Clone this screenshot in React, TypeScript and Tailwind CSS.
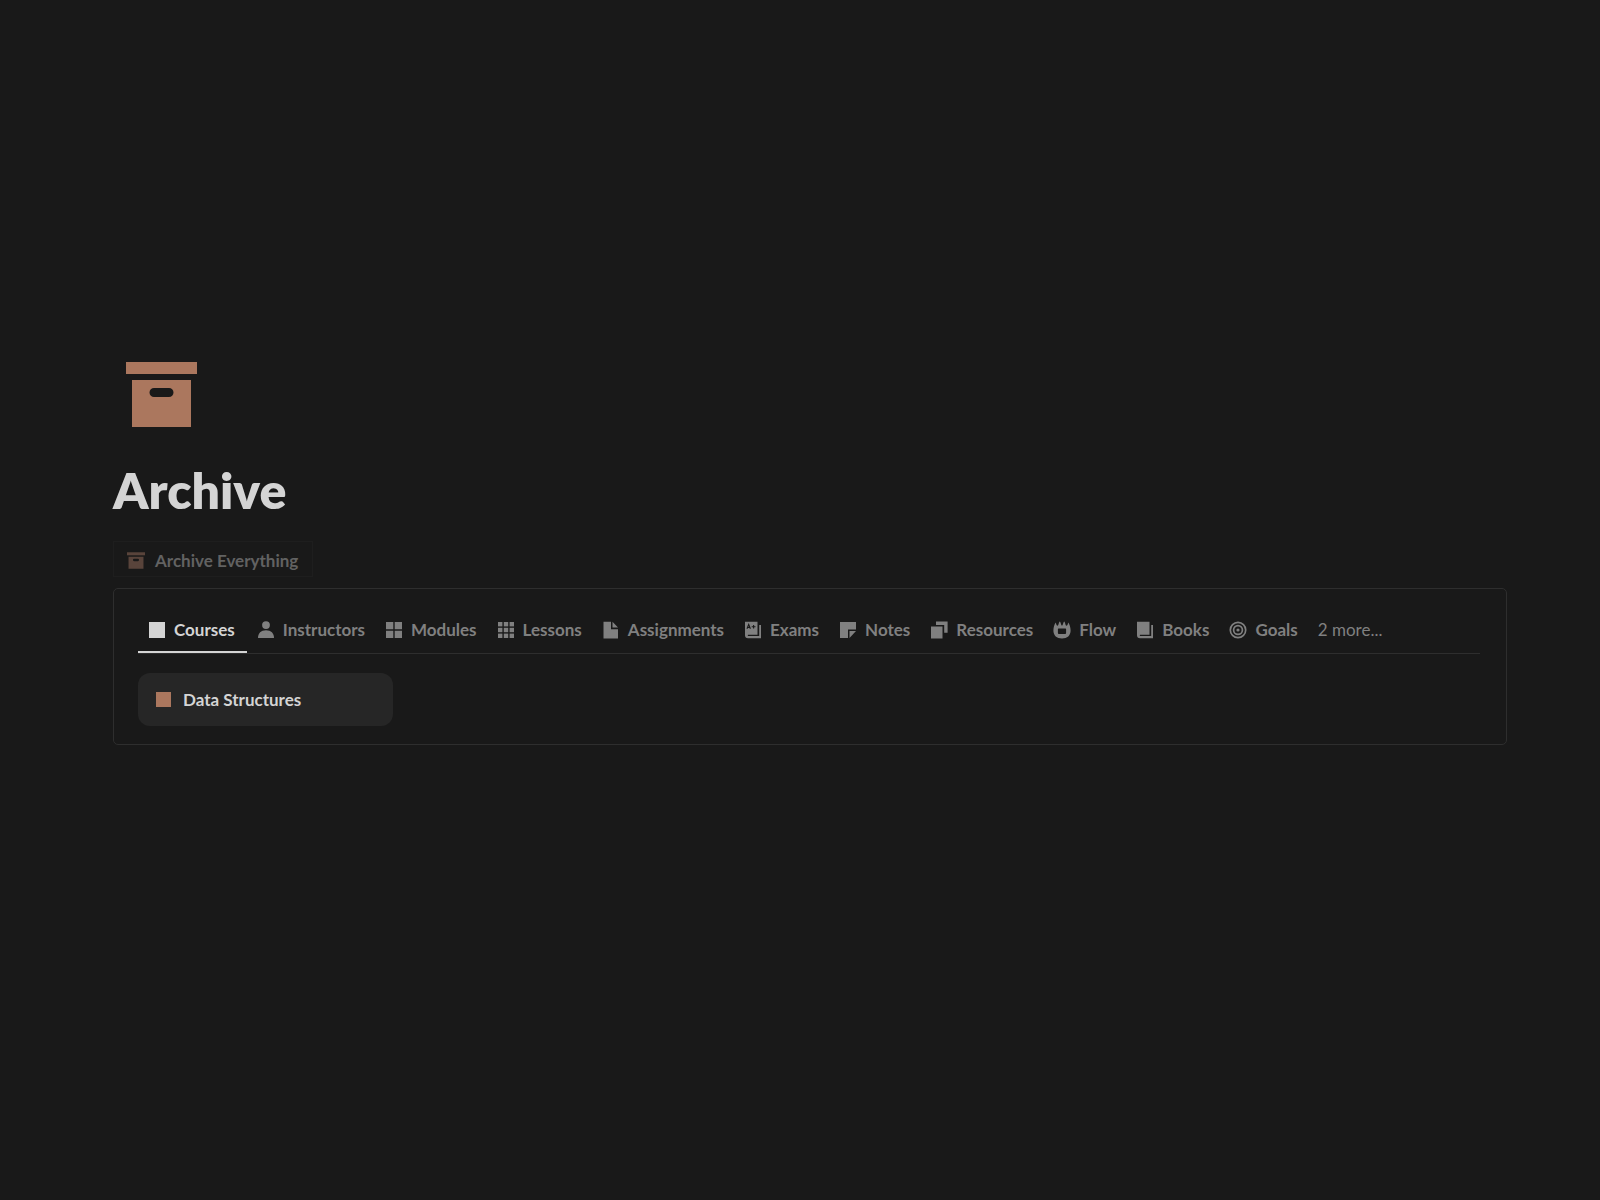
import React from 'react';
import clsx from 'clsx';

type IconProps = { className?: string };

const Svg = ({ className, children }: IconProps & { children: React.ReactNode }) => (
  <svg viewBox="0 0 16 16" fill="currentColor" aria-hidden="true" className={clsx('shrink-0', className)}>
    {children}
  </svg>
);

const SquareIcon = (p: IconProps) => (
  <Svg {...p}>
    <path d="M0 0h16v16H0z" />
  </Svg>
);

const PersonIcon = (p: IconProps) => (
  <Svg {...p}>
    <circle cx="8" cy="3.1" r="3.900" />
    <path d="M0 16c0-4.800 3-7.800 8-7.800s8 3 8 7.800z" />
  </Svg>
);

const GridIcon = (p: IconProps) => (
  <Svg {...p}>
    <path d="M0 0h7.300v7.300H0zM8.700 0H16v7.300H8.700zM0 8.700h7.300V16H0zM8.700 8.700H16V16H8.700z" />
  </Svg>
);

const GridSmallIcon = (p: IconProps) => (
  <Svg {...p}>
    {[0, 5.8, 11.6].map((y) =>
      [0, 5.8, 11.6].map((x) => <rect key={`${x}-${y}`} x={x} y={y} width="4.4" height="4.4" />)
    )}
  </Svg>
);

const FileIcon = (p: IconProps) => (
  <Svg {...p}>
    <path d="M.5-.3H8v7.500h7v9.300H.5zM9.500-.3L15 5.500H9.500z" />
  </Svg>
);

const ExamIcon = (p: IconProps) => (
  <Svg {...p}>
    <path d="M0-.3h12.500v13H3a1 1 0 0 0 0 1.300h11.200V3H16v13.300H3a3 3 0 0 1-3-3z" />
    <path
      d="M2 6.800l1.700-4.300 1.700 4.300M2.700 5.500h2.200M6.700 4.700h3.800M8.600 2.900v3.600"
      fill="none"
      stroke="#191919"
      strokeWidth="1.100"
    />
  </Svg>
);

const NoteIcon = (p: IconProps) => (
  <Svg {...p}>
    <path d="M0 0h16v7.500H8V16H0zM9.500 9H16l-6.500 7z" />
  </Svg>
);

const StackIcon = (p: IconProps) => (
  <Svg {...p}>
    <path d="M0 4.500h11.500V16.400H0zM5-.4h11.600v11.200h-3.400V2.900H5z" />
  </Svg>
);

const FlowIcon = (p: IconProps) => (
  <Svg {...p}>
    <path
      fillRule="evenodd"
      d="M1.800.500C2.200 2.500 2.800 3.800 3.600 3.800S5-.500 5.800-.500 7 3.600 8 3.600 9.400-.500 10.200-.500s1.300 4.300 2.200 4.300S13.800 2.500 14.200.500c1.400 1.800 2.400 4.800 2.400 8 0 5-3.400 8-8.600 8s-8.600-3-8.600-8c0-3.200 1-6.200 2.400-8zM4.500 6.400a.6.6 0 0 0-.6.600v3.800c0 .8.500 1.200 1.200 1.200h5.800c.7 0 1.200-.4 1.200-1.200V7a.6.6 0 0 0-.6-.6z"
    />
  </Svg>
);

const BookIcon = (p: IconProps) => (
  <Svg {...p}>
    <path d="M0-.3h12.500v13H3a1 1 0 0 0 0 1.300h11.200V3H16v13.300H3a3 3 0 0 1-3-3z" />
  </Svg>
);

const TargetIcon = (p: IconProps) => (
  <Svg {...p}>
    <g fill="none" stroke="currentColor" strokeWidth="1.700">
      <circle cx="8" cy="8" r="7.700" />
      <circle cx="8" cy="8" r="4.400" />
    </g>
    <circle cx="8" cy="8" r="1.600" />
  </Svg>
);

const ArchiveIcon = ({ className }: IconProps) => (
  <svg viewBox="0 0 71 65" fill="currentColor" aria-hidden="true" className={clsx('shrink-0', className)}>
    <path d="M0 0h71v12H0z" />
    <path
      fillRule="evenodd"
      d="M6 18h59v47H6zM28 26a4.500 4.500 0 0 0 0 9h15a4.500 4.500 0 0 0 0-9z"
    />
  </svg>
);

const tabs = [
  { label: 'Courses', Icon: SquareIcon },
  { label: 'Instructors', Icon: PersonIcon },
  { label: 'Modules', Icon: GridIcon },
  { label: 'Lessons', Icon: GridSmallIcon },
  { label: 'Assignments', Icon: FileIcon },
  { label: 'Exams', Icon: ExamIcon },
  { label: 'Notes', Icon: NoteIcon },
  { label: 'Resources', Icon: StackIcon },
  { label: 'Flow', Icon: FlowIcon },
  { label: 'Books', Icon: BookIcon },
  { label: 'Goals', Icon: TargetIcon },
];

export default function App() {
  const [active, setActive] = React.useState('Courses');

  return (
    <div className="min-h-screen bg-[#191919] pt-[362px] pr-[93px] pb-16 pl-[113px] font-['Lato',sans-serif] text-[#d4d4d4]">
      <ArchiveIcon className="ml-[13px] h-[65px] w-[71px] text-[#ab775e]" />

      <h1 className="mt-[30px] text-[50px] leading-[66px] font-extrabold">Archive</h1>

      <button
        type="button"
        className="mt-[18px] flex h-9 items-center gap-[10px] border border-[#1e1e1e] pt-[3px] pr-[14px] pl-[13px] text-[17px] leading-6 font-bold text-[#626262]"
      >
        <ArchiveIcon className="h-[17px] w-[18px] text-[#59443b]" />
        Archive Everything
      </button>

      <main className="mt-[11px] rounded-[5px] border border-[#2e2e2e] px-6 pt-6 pb-[18px]">
        <div role="tablist" className="mr-[2px] flex border-b border-[#2e2e2e]">
          {tabs.map(({ label, Icon }) => (
            <button
              key={label}
              type="button"
              role="tab"
              aria-selected={active === label}
              onClick={() => setActive(label)}
              className={clsx(
                '-mb-px flex h-10 items-center gap-[9px] border-b-2 pb-1 pl-[11px] text-[17px] leading-6 font-bold whitespace-nowrap',
                active === label
                  ? 'border-[#d4d4d4] pr-3 text-[#d4d4d4]'
                  : 'border-transparent pr-[10px] text-[#808080]'
              )}
            >
              <Icon className="size-4 overflow-visible" />
              {label}
            </button>
          ))}
          <button type="button" className="h-10 px-[10px] pb-[6px] text-[17px] leading-6 whitespace-nowrap text-[#808080]">
            2 more...
          </button>
        </div>

        <a
          href="#data-structures"
          className="mt-[19px] flex h-[53px] w-[255px] items-center gap-3 rounded-xl bg-[#262626] px-[18px] text-[17px] leading-6 font-bold"
        >
          <SquareIcon className="size-[15px] text-[#ab775e]" />
          Data Structures
        </a>
      </main>
    </div>
  );
}
